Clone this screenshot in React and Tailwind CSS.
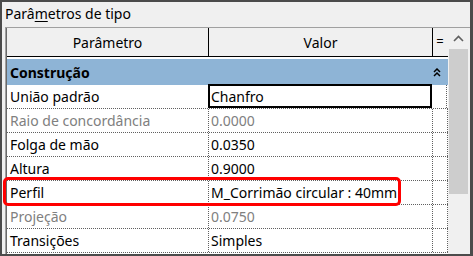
import React from "react";

const rows = [
  { name: "União padrão", value: "Chanfro", boxed: true },
  { name: "Raio de concordância", value: "0.0000", dim: true },
  { name: "Folga de mão", value: "0.0350" },
  { name: "Altura", value: "0.9000" },
  { name: "Perfil", value: "M_Corrimão circular : 40mm" },
  { name: "Projeção", value: "0.0750", dim: true },
  { name: "Transições", value: "Simples" },
];

export default function App() {
  return (
    <div
      className="relative w-[473px] h-[256px] overflow-hidden bg-[#f0f0f0] border-l-2 border-t-2 border-r-[3px] border-b-2 border-[#4b4b4b] text-black"
      style={{ fontFamily: '"Noto Sans", "Open Sans", sans-serif' }}
    >
      <div className="h-[25px] pl-[3px] pt-[2px] text-[14px] leading-[20px]">
        Parâ<span className="underline underline-offset-2">m</span>etros de tipo
      </div>
      <div className="ml-[3px] w-[465px] h-[227px] border-t border-l border-[#a0a0a0] flex">
        <div className="w-[442px] flex flex-col bg-white border-l border-[#696969]">
          <div className="flex h-[29px] bg-[#f0f0f0] border-b border-black text-[14px]">
            <div className="w-[202px] border-r border-black flex items-center justify-center">Parâmetro</div>
            <div className="w-[224px] border-r border-black flex items-center justify-center">Valor</div>
            <div className="w-[14px] flex items-center justify-center text-[13px]">=</div>
          </div>
          <div className="mt-[2px] h-[26px] bg-[#8eb4d6] flex items-center justify-between pl-[3px] pr-[6px] text-[14px] font-bold w-[441px]">
            <span>Construção</span>
            <svg width="8" height="9" viewBox="0 0 8 9" className="mr-[1px]">
              <path d="M1 4 L4 1 L7 4 M1 8 L4 5 L7 8" stroke="black" strokeWidth="1.5" fill="none" />
            </svg>
          </div>
          {rows.map((r, i) => (
            <div key={i} className="flex h-[24px] border-b border-dotted border-[#606060] text-[14px]">
              <div className={`w-[202px] border-r border-dotted border-[#606060] flex items-center pl-[3px] ${r.dim ? "text-[#808080]" : ""}`}>
                {r.name}
              </div>
              {r.boxed ? (
                <div className="w-[224px] -ml-px -mt-px h-[24px] border-2 border-black flex items-center pl-[1px]">
                  {r.value}
                </div>
              ) : (
                <div className={`w-[224px] border-r border-dotted border-[#606060] flex items-center pl-[2px] ${r.dim ? "text-[#808080]" : ""}`}>
                  {r.value}
                </div>
              )}
              <div className="w-[15px] border-r border-dotted border-[#606060]"></div>
            </div>
          ))}
        </div>
        <div className="w-[21px] flex flex-col bg-[#f0f0f0]">
          <div className="h-[21px] flex items-center justify-center">
            <svg width="11" height="7" viewBox="0 0 11 7">
              <path d="M1 6 L5.5 1.5 L10 6" stroke="#606060" strokeWidth="1.6" fill="none" />
            </svg>
          </div>
          <div className="mx-[1px] h-[145px] bg-[#cdcdcd]"></div>
        </div>
      </div>
      <div className="absolute left-[1px] top-[175px] w-[398px] h-[29px] border-[3px] border-[#ff0000] rounded-[5px] pointer-events-none"></div>
    </div>
  );
}
